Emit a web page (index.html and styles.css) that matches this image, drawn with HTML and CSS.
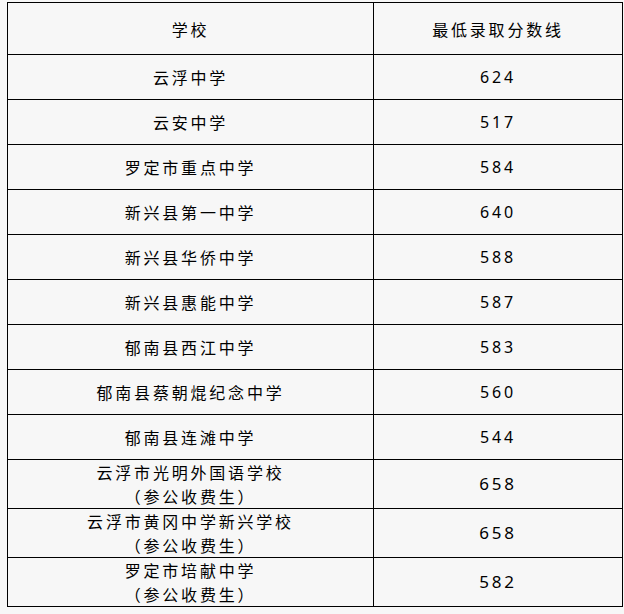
FILE: index.html
```html
<!DOCTYPE html>
<html lang="zh">
<head>
<meta charset="utf-8">
<link rel="stylesheet" href="styles.css">
</head>
<body>
<table class="score-table">
  <colgroup><col class="col-school"><col class="col-score"></colgroup>
  <tr class="head"><th>学校</th><th>最低录取分数线</th></tr>
  <tr><td>云浮中学</td><td class="num">624</td></tr>
  <tr><td>云安中学</td><td class="num">517</td></tr>
  <tr><td>罗定市重点中学</td><td class="num">584</td></tr>
  <tr><td>新兴县第一中学</td><td class="num">640</td></tr>
  <tr><td>新兴县华侨中学</td><td class="num">588</td></tr>
  <tr><td>新兴县惠能中学</td><td class="num">587</td></tr>
  <tr><td>郁南县西江中学</td><td class="num">583</td></tr>
  <tr><td>郁南县蔡朝焜纪念中学</td><td class="num">560</td></tr>
  <tr><td>郁南县连滩中学</td><td class="num">544</td></tr>
  <tr class="tall"><td>云浮市光明外国语学校<br>（参公收费生）</td><td class="num big">658</td></tr>
  <tr class="tall"><td>云浮市黄冈中学新兴学校<br>（参公收费生）</td><td class="num big">658</td></tr>
  <tr class="tall"><td>罗定市培献中学<br>（参公收费生）</td><td class="num big">582</td></tr>
</table>
</body>
</html>
```
FILE: styles.css
```css
html, body {
  margin: 0;
  padding: 0;
  background: #f7f7f7;
}
body {
  padding: 2px 0 0 7px;
  font-family: "Noto Sans CJK SC", sans-serif;
  color: #000;
}
.score-table {
  border-collapse: collapse;
  width: 615px;
  table-layout: fixed;
}
.col-school { width: 366px; }
.col-score { width: 249px; }
.score-table th,
.score-table td {
  border: 1px solid #000;
  padding: 0;
  text-align: center;
  vertical-align: middle;
  font-weight: normal;
  font-size: 16px;
  letter-spacing: 2.8px;
  line-height: 24px;
  height: 44px;
}
.score-table .head th { height: 51px; }
.score-table .tall td { height: 48px; }
.num {
  font-family: "Noto Sans", "DejaVu Sans", sans-serif;
  font-size: 15px;
  letter-spacing: 2px;
  padding-top: 1px;
}
.num.big { font-size: 17px; }
```
